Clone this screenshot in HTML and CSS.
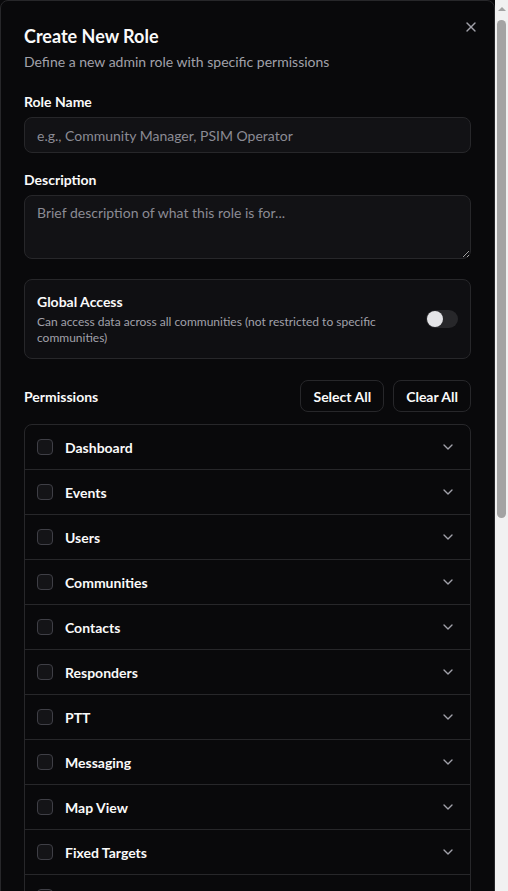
FILE: index.html
```html
<!DOCTYPE html>
<html lang="en">
<head>
    <meta charset="UTF-8">
    <meta name="viewport" content="width=device-width, initial-scale=1.0">
    <title>Create New Role</title>
    <link rel="stylesheet" href="styles.css">
</head>
<body>
<div class="viewport">
    <div class="scroller">
        <div class="dialog">
            <button class="close-btn" aria-label="Close">
                <svg width="16" height="16" viewBox="0 0 24 24" fill="none" stroke="currentColor" stroke-width="2" stroke-linecap="round"><path d="M18 6 6 18"/><path d="m6 6 12 12"/></svg>
            </button>

            <div class="dialog-header">
                <h2>Create New Role</h2>
                <p>Define a new admin role with specific permissions</p>
            </div>

            <div class="form-group">
                <label for="roleName">Role Name</label>
                <input type="text" id="roleName" placeholder="e.g., Community Manager, PSIM Operator">
            </div>

            <div class="form-group">
                <label for="roleDesc">Description</label>
                <textarea id="roleDesc" placeholder="Brief description of what this role is for..."></textarea>
            </div>

            <div class="global-card">
                <div class="global-text">
                    <div class="global-title">Global Access</div>
                    <div class="global-desc">Can access data across all communities (not restricted to specific communities)</div>
                </div>
                <div class="switch"><span class="knob"></span></div>
            </div>

            <div class="perm-head">
                <span class="perm-title">Permissions</span>
                <div class="perm-actions">
                    <button class="btn-outline">Select All</button>
                    <button class="btn-outline">Clear All</button>
                </div>
            </div>

            <div class="perm-list">
                <div class="perm-row"><span class="check"></span><span class="perm-name">Dashboard</span><svg class="chev" viewBox="0 0 24 24"><path d="m6 9 6 6 6-6"/></svg></div>
                <div class="perm-row"><span class="check"></span><span class="perm-name">Events</span><svg class="chev" viewBox="0 0 24 24"><path d="m6 9 6 6 6-6"/></svg></div>
                <div class="perm-row"><span class="check"></span><span class="perm-name">Users</span><svg class="chev" viewBox="0 0 24 24"><path d="m6 9 6 6 6-6"/></svg></div>
                <div class="perm-row"><span class="check"></span><span class="perm-name">Communities</span><svg class="chev" viewBox="0 0 24 24"><path d="m6 9 6 6 6-6"/></svg></div>
                <div class="perm-row"><span class="check"></span><span class="perm-name">Contacts</span><svg class="chev" viewBox="0 0 24 24"><path d="m6 9 6 6 6-6"/></svg></div>
                <div class="perm-row"><span class="check"></span><span class="perm-name">Responders</span><svg class="chev" viewBox="0 0 24 24"><path d="m6 9 6 6 6-6"/></svg></div>
                <div class="perm-row"><span class="check"></span><span class="perm-name">PTT</span><svg class="chev" viewBox="0 0 24 24"><path d="m6 9 6 6 6-6"/></svg></div>
                <div class="perm-row"><span class="check"></span><span class="perm-name">Messaging</span><svg class="chev" viewBox="0 0 24 24"><path d="m6 9 6 6 6-6"/></svg></div>
                <div class="perm-row"><span class="check"></span><span class="perm-name">Map View</span><svg class="chev" viewBox="0 0 24 24"><path d="m6 9 6 6 6-6"/></svg></div>
                <div class="perm-row"><span class="check"></span><span class="perm-name">Fixed Targets</span><svg class="chev" viewBox="0 0 24 24"><path d="m6 9 6 6 6-6"/></svg></div>
                <div class="perm-row"><span class="check"></span><span class="perm-name">Devices</span><svg class="chev" viewBox="0 0 24 24"><path d="m6 9 6 6 6-6"/></svg></div>
                <div class="perm-row"><span class="check"></span><span class="perm-name">Alerts</span><svg class="chev" viewBox="0 0 24 24"><path d="m6 9 6 6 6-6"/></svg></div>
                <div class="perm-row"><span class="check"></span><span class="perm-name">Reports</span><svg class="chev" viewBox="0 0 24 24"><path d="m6 9 6 6 6-6"/></svg></div>
                <div class="perm-row"><span class="check"></span><span class="perm-name">Settings</span><svg class="chev" viewBox="0 0 24 24"><path d="m6 9 6 6 6-6"/></svg></div>
            </div>

            <div class="dialog-footer">
                <button class="btn-outline">Cancel</button>
                <button class="btn-primary">Create Role</button>
            </div>
        </div>
    </div>

    <div class="scrollbar">
        <div class="scroll-up"></div>
        <div class="scroll-track"><div class="scroll-thumb"></div></div>
    </div>
</div>
</body>
</html>
```

FILE: styles.css
```css
/* Reset */
html, body {
    margin: 0;
    padding: 0;
    background: #09090b;
    font-family: Lato, "Noto Sans", sans-serif;
    color: #fafafa;
}

* {
    box-sizing: border-box;
}

.viewport {
    display: flex;
    width: 508px;
    height: 891px;
    overflow: hidden;
}

.scroller {
    flex: 1;
    overflow: hidden;
}

/* fake light scrollbar on the right */
.scrollbar {
    width: 13px;
    flex-shrink: 0;
    background: #f1f1f1;
    display: flex;
    flex-direction: column;
}

.scroll-up {
    height: 17px;
    display: flex;
    justify-content: center;
    align-items: center;
}

.scroll-up::before {
    content: "";
    border-left: 4px solid transparent;
    border-right: 4px solid transparent;
    border-bottom: 4px solid #a3a3a3;
}

.scroll-track {
    flex: 1;
    padding: 3px 2px 0 2px;
}

.scroll-thumb {
    height: 498px;
    border-radius: 5px;
    background: #a3a3a3;
}

.dialog {
    position: relative;
    border: 1px solid #27272a;
    border-radius: 8px 8px 0 0;
    background: #09090b;
    padding: 21px 23px 24px 23px;
}

.close-btn {
    position: absolute;
    top: 18px;
    right: 15px;
    background: none;
    border: none;
    padding: 0;
    color: #a1a1aa;
    cursor: pointer;
}

.dialog-header h2 {
    margin: 0;
    font-size: 18px;
    font-weight: 700;
    line-height: 28px;
}

.dialog-header p {
    margin: 2px 0 0 0;
    font-size: 14px;
    line-height: 20px;
    color: #a1a1aa;
}

.form-group {
    margin-top: 20px;
}

.form-group + .form-group {
    margin-top: 17px;
}

.form-group label {
    display: block;
    font-size: 14px;
    font-weight: 700;
    line-height: 20px;
    margin-bottom: 5px;
}

.form-group input,
.form-group textarea {
    display: block;
    width: 100%;
    border: 1px solid #27272a;
    border-radius: 8px;
    background: #121215;
    color: #fafafa;
    font-family: inherit;
    font-size: 14px;
    padding: 0 12px;
    outline: none;
}

.form-group input {
    height: 36px;
}

.form-group textarea {
    height: 64px;
    padding-top: 8px;
    resize: vertical;
}

.form-group input::placeholder,
.form-group textarea::placeholder {
    color: #8b8b94;
}

.global-card {
    margin-top: 20px;
    border: 1px solid #27272a;
    border-radius: 8px;
    background: #0f0f12;
    padding: 12px;
    display: flex;
    align-items: center;
    gap: 30px;
}

.global-title {
    font-size: 14px;
    font-weight: 700;
    line-height: 20px;
}

.global-desc {
    margin-top: 2px;
    font-size: 12px;
    line-height: 16px;
    color: #a1a1aa;
}

.switch {
    flex-shrink: 0;
    width: 32px;
    height: 18px;
    border-radius: 9px;
    background: #27272a;
    padding: 1px;
}

.knob {
    display: block;
    width: 16px;
    height: 16px;
    border-radius: 50%;
    background: #e4e4e7;
}

.perm-head {
    margin-top: 21px;
    display: flex;
    align-items: center;
    justify-content: space-between;
}

.perm-title {
    font-size: 14px;
    font-weight: 700;
}

.perm-actions {
    display: flex;
    gap: 9px;
}

.btn-outline,
.btn-primary {
    height: 32px;
    padding: 0 12px;
    border-radius: 8px;
    font-family: inherit;
    font-size: 14px;
    font-weight: 700;
    cursor: pointer;
}

.btn-outline {
    background: #09090b;
    border: 1px solid #27272a;
    color: #fafafa;
}

.btn-primary {
    background: #fafafa;
    border: 1px solid #fafafa;
    color: #09090b;
}

.perm-list {
    margin-top: 12px;
    border: 1px solid #27272a;
    border-radius: 8px;
}

.perm-row {
    display: flex;
    align-items: center;
    height: 45px;
    padding: 0 14px 0 12px;
    border-top: 1px solid #27272a;
}

.perm-row:first-child {
    border-top: none;
    height: 44px;
}

.check {
    width: 16px;
    height: 16px;
    border: 1px solid #3f3f46;
    border-radius: 4px;
    background: #141417;
}

.perm-name {
    margin-left: 12px;
    flex: 1;
    font-size: 14px;
    font-weight: 700;
}

.chev {
    width: 16px;
    height: 16px;
    fill: none;
    stroke: #a1a1aa;
    stroke-width: 2;
    stroke-linecap: round;
    stroke-linejoin: round;
}

.dialog-footer {
    margin-top: 24px;
    display: flex;
    justify-content: flex-end;
    gap: 8px;
}
```
